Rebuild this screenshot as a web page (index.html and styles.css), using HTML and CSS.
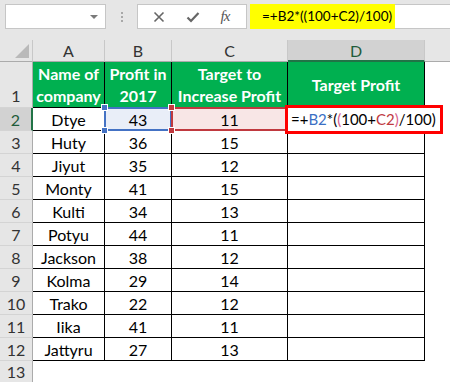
FILE: index.html
```html
<!DOCTYPE html>
<html lang="en">
<head>
  <meta charset="utf-8" />
  <title>Target Profit</title>
  <meta name="viewport" content="width=device-width, initial-scale=1.0" />
  <link rel="stylesheet" href="styles.css">
</head>

<body>
  <div class="toolbar">
    <div class="namebox"><span class="caret"></span></div>
    <div class="grip"><i></i><i></i><i></i></div>
    <div class="buttons">
      <svg class="icon" width="12" height="12" viewBox="0 0 12 12">
        <path d="M1.5 1.5 L10.5 10.5 M10.5 1.5 L1.5 10.5" stroke="#666" stroke-width="1.6" fill="none" />
      </svg>
      <svg class="icon" width="14" height="12" viewBox="0 0 14 12">
        <path d="M1.5 6.5 L5 10 L12.5 2" stroke="#666" stroke-width="2.2" fill="none" />
      </svg>
      <span class="fx">fx</span>
    </div>
    <div class="formula">
      <span class="formula-text">=+B2*((100+C2)/100)</span>
    </div>
  </div>

  <div class="sheet">
    <div class="corner"><span class="tri"></span></div>
    <div class="ch">A</div>
    <div class="ch">B</div>
    <div class="ch">C</div>
    <div class="ch ch-sel">D</div>
    <div class="ch ch-last"></div>

    <div class="rh rh-top">1</div>
    <div class="c hd">Name of company</div>
    <div class="c hd">Profit in 2017</div>
    <div class="c hd">Target to Increase Profit</div>
    <div class="c hd">Target Profit</div>
    <div class="e"></div>

    <div class="rh rh-sel">2</div>
    <div class="c">Dtye</div>
    <div class="c ref-b">43
      <span class="h tl"></span><span class="h tr"></span><span class="h bl"></span><span class="h br"></span>
    </div>
    <div class="c ref-c">11
      <span class="h tl red"></span><span class="h bl red"></span>
    </div>
    <div class="c edit-cell">
      <div class="editor">=+<span class="blue">B2</span>*(<span class="pink">(</span>100+<span class="red-t">C2</span><span class="pink">)</span>/100)</div>
    </div>
    <div class="e"></div>

    <div class="rh">3</div><div class="c">Huty</div><div class="c">36</div><div class="c">15</div><div class="c"></div><div class="e"></div>
    <div class="rh">4</div><div class="c">Jiyut</div><div class="c">35</div><div class="c">12</div><div class="c"></div><div class="e"></div>
    <div class="rh">5</div><div class="c">Monty</div><div class="c">41</div><div class="c">15</div><div class="c"></div><div class="e"></div>
    <div class="rh">6</div><div class="c">Kulti</div><div class="c">34</div><div class="c">13</div><div class="c"></div><div class="e"></div>
    <div class="rh">7</div><div class="c">Potyu</div><div class="c">44</div><div class="c">11</div><div class="c"></div><div class="e"></div>
    <div class="rh">8</div><div class="c">Jackson</div><div class="c">38</div><div class="c">12</div><div class="c"></div><div class="e"></div>
    <div class="rh">9</div><div class="c">Kolma</div><div class="c">29</div><div class="c">14</div><div class="c"></div><div class="e"></div>
    <div class="rh">10</div><div class="c">Trako</div><div class="c">22</div><div class="c">12</div><div class="c"></div><div class="e"></div>
    <div class="rh">11</div><div class="c">Iika</div><div class="c">41</div><div class="c">11</div><div class="c"></div><div class="e"></div>
    <div class="rh">12</div><div class="c">Jattyru</div><div class="c">27</div><div class="c">13</div><div class="c"></div><div class="e"></div>

    <div class="rh rh-end">13</div><div class="e"></div><div class="e"></div><div class="e"></div><div class="e"></div><div class="e"></div>
  </div>
</body>
</html>
```

FILE: styles.css
```css
html, body {
  margin: 0;
  padding: 0;
  width: 450px;
  height: 382px;
  overflow: hidden;
  background-color: white;
  font-family: "Lato", "Open Sans", sans-serif;
}

/* barre de formule */
.toolbar {
  display: flex;
  align-items: flex-start;
  height: 40px;
  padding: 4px 0 0 5px;
  box-sizing: border-box;
  background-color: #e6e6e6;
}

.namebox {
  width: 101px;
  height: 25px;
  box-sizing: border-box;
  background-color: white;
  border: 1px solid #c6c6c6;
  display: flex;
  align-items: center;
  justify-content: flex-end;
  padding-right: 7px;
}

.caret {
  width: 0;
  height: 0;
  border-left: 4px solid transparent;
  border-right: 4px solid transparent;
  border-top: 4px solid #7a7a7a;
}

.grip {
  width: 31px;
  height: 25px;
  display: flex;
  flex-direction: column;
  align-items: center;
  justify-content: center;
  gap: 2px;
}

.grip i {
  width: 2px;
  height: 2px;
  background-color: #a8a8a8;
}

.buttons {
  width: 110px;
  height: 25px;
  box-sizing: border-box;
  background-color: white;
  border: 1px solid #c6c6c6;
  display: flex;
  align-items: center;
  justify-content: space-around;
  padding: 0 6px 0 4px;
}

.fx {
  font-family: "Liberation Serif", serif;
  font-style: italic;
  font-size: 15px;
  color: #555;
  letter-spacing: -1px;
}

.formula {
  flex: 1;
  height: 25px;
  margin-left: 3px;
  background-color: white;
  border: 1px solid #c6c6c6;
  border-right: none;
  box-sizing: border-box;
  display: flex;
}

.formula-text {
  width: 145px;
  box-sizing: border-box;
  background-color: #ffff00;
  padding-left: 12px;
  font-size: 13.5px;
  line-height: 25px;
  color: #000;
  margin-top: -1px;
  height: 25px;
  margin-left: -1px;
}

/* feuille */
.sheet {
  display: grid;
  grid-template-columns: 33px 72px 67px 116px 137px 1fr;
  grid-template-rows: 22px 46px repeat(11, 23px) 1fr;
  height: 342px;
  font-size: 16px;
  color: #000;
}

.corner {
  background-color: #e6e6e6;
  border-right: 1px solid #c8c8c8;
  border-bottom: 1px solid #ababab;
  position: relative;
}

.tri {
  position: absolute;
  right: 3px;
  bottom: 3px;
  width: 0;
  height: 0;
  border-left: 14px solid transparent;
  border-bottom: 14px solid #b9b9b9;
}

.ch {
  background-color: #e6e6e6;
  border-right: 1px solid #c8c8c8;
  border-bottom: 1px solid #ababab;
  display: flex;
  align-items: center;
  justify-content: center;
  color: #333;
}

.ch-sel {
  background-color: #d2d2d2;
  color: #1f5c3a;
  border-bottom: 2px solid #217346;
}

.ch-last {
  border-right: none;
}

.rh {
  background-color: #e6e6e6;
  border-right: 1px solid #ababab;
  border-bottom: 1px solid #d4d4d4;
  display: flex;
  align-items: center;
  justify-content: center;
  color: #333;
}

.rh-top {
  align-items: flex-end;
  padding-bottom: 2px;
}

.rh-sel {
  background-color: #d2d2d2;
  color: #1f5c3a;
  border-right: 2px solid #217346;
}

.rh-end {
  border-bottom: none;
}

.c {
  border-right: 1px solid #000;
  border-bottom: 1px solid #000;
  display: flex;
  align-items: center;
  justify-content: center;
  text-align: center;
  position: relative;
}

.hd {
  background-color: #00b050;
  color: white;
  font-weight: bold;
  line-height: 22px;
  padding: 0 1px;
}

.e {
  background-color: white;
}

/* références en couleur */
.ref-b {
  background-color: #e9eef8;
}

.ref-b::before {
  content: "";
  position: absolute;
  inset: -1px -1px -1px -1px;
  border: 2px solid #4472c4;
}

.ref-c {
  background-color: #f8e6e6;
}

.ref-c::before {
  content: "";
  position: absolute;
  inset: -1px -1px -1px -1px;
  border: 2px solid #c0393f;
}

.h {
  position: absolute;
  width: 5px;
  height: 5px;
  background-color: #4472c4;
  border: 1px solid white;
  z-index: 2;
}

.h.red {
  background-color: #c0393f;
}

.tl { left: -4px; top: -4px; }
.tr { right: -4px; top: -4px; }
.bl { left: -4px; bottom: -4px; }
.br { right: -4px; bottom: -4px; }

.editor {
  position: absolute;
  left: -3px;
  top: -3px;
  width: 158px;
  height: 29px;
  box-sizing: border-box;
  border: 3px solid #ff0000;
  background-color: white;
  z-index: 3;
  padding-left: 3px;
  font-size: 15px;
  line-height: 23px;
  text-align: left;
  white-space: nowrap;
}

.blue { color: #3a6fc4; }
.red-t { color: #c0393f; }
.pink { color: #d9608a; }
```
